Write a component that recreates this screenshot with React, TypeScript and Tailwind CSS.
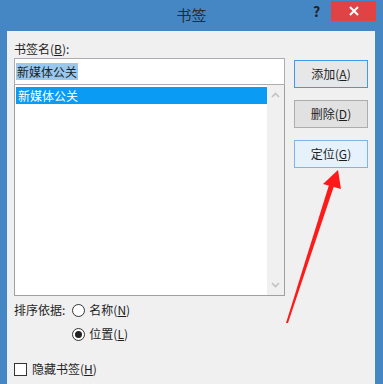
export default function App() {
  const font = { fontFamily: '"Noto Sans CJK SC", "Noto Sans", sans-serif' };

  return (
    <div
      className="relative w-[383px] h-[384px] bg-[#4587c5] flex flex-col overflow-hidden text-[12px] text-[#1e1e1e]"
      style={font}
    >
      {/* Title bar */}
      <div className="relative h-[31px] flex items-center justify-center shrink-0">
        <span className="text-[15px] text-[#2b2b2b] leading-none -mt-[2px]">书签</span>
        <span className="absolute left-[313px] top-[4px] text-[14px] font-bold text-[#222] leading-none">?</span>
        <div className="absolute left-[331px] top-[1px] w-[45px] h-[20px] bg-[#e04343] flex items-center justify-center">
          <svg width="10" height="10" viewBox="0 0 10 10">
            <path d="M1 1 L9 9 M9 1 L1 9" stroke="white" strokeWidth="2" />
          </svg>
        </div>
      </div>

      {/* Client area */}
      <div className="ml-[7px] mr-[8px] flex-1 bg-[#f0f0f0] px-[7px] pt-[9px] flex flex-col">
        <div className="flex gap-[9px]">
          {/* Left column */}
          <div className="w-[271px] flex flex-col">
            <div className="h-[18px] leading-[18px]">
              书签名(<span className="underline">B</span>):
            </div>
            <div className="h-[27px] bg-white border border-[#abadb3] px-[1px] flex items-center">
              <span className="bg-[#99c9ef] leading-[17px] px-[1px]">新媒体公关</span>
            </div>
            <div className="h-[211px] bg-white border border-[#a0a0a0] border-t-0 flex">
              <div className="flex-1 pt-[2px] pl-[1px]">
                <div className="h-[17px] bg-[#0a9bf5] text-white leading-[17px] pl-[2px]">新媒体公关</div>
              </div>
              <div className="w-[17px] bg-[#f0f0f0] flex flex-col justify-between items-center py-[7px]">
                <svg width="9" height="6" viewBox="0 0 9 6">
                  <path d="M1 5 L4.5 1.5 L8 5" stroke="#c2c2c2" strokeWidth="1.6" fill="none" />
                </svg>
                <svg width="9" height="6" viewBox="0 0 9 6">
                  <path d="M1 1 L4.5 4.5 L8 1" stroke="#c2c2c2" strokeWidth="1.6" fill="none" />
                </svg>
              </div>
            </div>
          </div>

          {/* Buttons */}
          <div className="w-[74px] flex flex-col gap-[12px] pt-[20px]">
            <button className="h-[28px] border border-[#3c9af0] bg-[#e7e7e7] text-[12px]" style={font}>
              添加(<span className="underline">A</span>)
            </button>
            <button className="h-[28px] border border-[#adadad] bg-[#e1e1e1] text-[12px]" style={font}>
              删除(<span className="underline">D</span>)
            </button>
            <button className="h-[28px] border border-[#7eb4ea] bg-[#e5f1fb] text-[12px]" style={font}>
              定位(<span className="underline">G</span>)
            </button>
          </div>
        </div>

        {/* Sort options */}
        <div className="flex mt-[6px] gap-[7px]">
          <div className="leading-[16px]">排序依据:</div>
          <div className="flex flex-col gap-[8px]">
            <label className="flex items-center gap-[4px] h-[16px]">
              <span className="w-[13px] h-[13px] rounded-full border border-[#333] bg-white" />
              <span>
                名称(<span className="underline">N</span>)
              </span>
            </label>
            <label className="flex items-center gap-[4px] h-[16px]">
              <span className="w-[13px] h-[13px] rounded-full border border-[#333] bg-white flex items-center justify-center">
                <span className="w-[7px] h-[7px] rounded-full bg-[#222]" />
              </span>
              <span>
                位置(<span className="underline">L</span>)
              </span>
            </label>
          </div>
        </div>

        <label className="flex items-center gap-[5px] mt-[19px] h-[16px]">
          <span className="w-[13px] h-[13px] border border-[#333] bg-white" />
          <span>
            隐藏书签(<span className="underline">H</span>)
          </span>
        </label>
      </div>

      {/* Red annotation arrow */}
      <svg className="absolute left-0 top-0 pointer-events-none" width="383" height="384" viewBox="0 0 383 384">
        <polygon points="286,323 288,323 334,186 329,185" fill="#ff1a1a" />
        <polygon points="338,170 323,184 341,189" fill="#ff1a1a" />
      </svg>
    </div>
  );
}
